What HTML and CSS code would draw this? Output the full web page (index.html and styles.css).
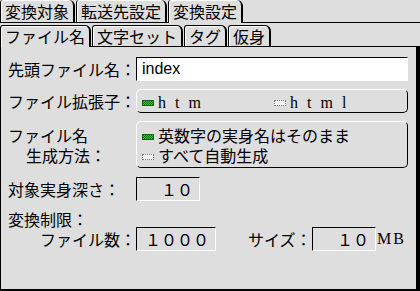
FILE: index.html
```html
<!DOCTYPE html>
<html lang="ja">
<head>
  <meta charset="UTF-8">
  <title>変換設定</title>
  <link rel="stylesheet" href="styles.css">
</head>
<body>

<div class="tabbar top-tabs">
  <div class="tab">変換対象</div>
  <div class="tab">転送先設定</div>
  <div class="tab active">変換設定</div>
</div>

<div class="tabbar sub-tabs">
  <div class="tab active">ファイル名</div>
  <div class="tab">文字セット</div>
  <div class="tab">タグ</div>
  <div class="tab">仮身</div>
</div>

<div class="panel">
  <div class="row">
    <span class="label">先頭ファイル名：</span>
    <div class="field text">index</div>
  </div>

  <div class="row">
    <span class="label">ファイル拡張子：</span>
    <div class="group inline">
      <span class="option first"><i class="mark on"></i><span class="latin">htm</span></span>
      <span class="option"><i class="mark"></i><span class="latin">html</span></span>
    </div>
  </div>

  <div class="row top">
    <div class="label two-line">
      <div>ファイル名</div>
      <div class="indent">生成方法：</div>
    </div>
    <div class="group stack">
      <span class="option"><i class="mark on"></i>英数字の実身名はそのまま</span>
      <span class="option"><i class="mark"></i>すべて自動生成</span>
    </div>
  </div>

  <div class="row">
    <span class="label">対象実身深さ：</span>
    <div class="field num depth">１０</div>
  </div>

  <div class="section-title">変換制限：</div>
  <div class="row limits">
    <span class="label right">ファイル数：</span>
    <div class="field num count">１０００</div>
    <span class="size-label">サイズ：</span>
    <div class="field num size">１０</div>
    <span class="latin unit">MB</span>
  </div>
</div>

</body>
</html>
```

FILE: styles.css
```css
* {
  box-sizing: border-box;
}

body {
  margin: 0;
  height: 100vh;
  overflow: hidden;
  display: flex;
  flex-direction: column;
  background-color: #dedede;
  color: #000;
  font-family: "Noto Sans CJK JP", sans-serif;
  font-size: 16px;
}

/* tab rows */
.tabbar {
  display: flex;
  align-items: flex-end;
  gap: 1px;
  box-shadow: inset 0 -1px 0 #000;
}

.top-tabs {
  height: 23px;
}

.sub-tabs {
  height: 24px;
}

.tab {
  background-color: #dedede;
  border: 1px solid #000;
  border-right-width: 2px;
  border-bottom: 0;
  border-radius: 3px 6px 0 0;
  padding: 0 4px;
  line-height: 20px;
  margin-bottom: 1px;
  box-shadow: inset 1px 1px 0 #fff;
  white-space: nowrap;
}

.top-tabs .tab {
  border-top: 0;
  line-height: 22px;
}

.tab.active {
  margin-bottom: 0;
  padding-bottom: 1px;
}

/* panel */
.panel {
  flex: 1;
  border-left: 1px solid #000;
  border-right: 4px solid #000;
  border-bottom: 2px solid #000;
  padding: 10px 0 0 7px;
}

.row {
  display: flex;
  align-items: center;
  margin-bottom: 8px;
}

.row.top {
  align-items: flex-start;
  margin-bottom: 9px;
}

.label {
  width: 128px;
  flex-shrink: 0;
  white-space: nowrap;
  line-height: 24px;
}

.label.two-line {
  padding-top: 4px;
  line-height: 20px;
}

.indent {
  padding-left: 18px;
}

.label.right {
  text-align: right;
}

/* sunken fields */
.field {
  height: 24px;
  border: 1px solid;
  border-color: #000 #fff #fff #000;
  line-height: 22px;
  white-space: nowrap;
}

.field.text {
  width: 272px;
  background-color: #fff;
  padding-left: 5px;
  font-family: "Liberation Sans", sans-serif;
}

.field.num {
  text-align: right;
  padding-right: 6px;
}

.depth {
  width: 64px;
}

.count {
  width: 80px;
}

.size {
  width: 64px;
}

/* raised radio groups */
.group {
  width: 272px;
  border: 1px solid;
  border-color: #fff #000 #000 #fff;
  border-radius: 5px;
  padding-left: 5px;
}

.group.inline {
  display: flex;
  height: 24px;
  line-height: 22px;
}

.group.stack {
  display: flex;
  flex-direction: column;
  padding-top: 3px;
  padding-bottom: 2px;
  line-height: 20px;
}

.option {
  white-space: nowrap;
}

.option.first {
  width: 132px;
}

.mark {
  display: inline-block;
  width: 12px;
  height: 6px;
  margin-right: 4px;
  vertical-align: 2px;
  border: 1px dotted #7a7a7a;
  background-color: #f2f2f2;
}

.mark.on {
  border: 1px solid #1f5f1f;
  background: repeating-conic-gradient(#1ed41e 0 25%, #0b7a0b 0 50%) 0 0 / 2px 2px;
}

.latin {
  font-family: "Liberation Serif", serif;
  letter-spacing: 9px;
}

.section-title {
  line-height: 20px;
}

.row.limits {
  margin-top: -2px;
}

.size-label {
  margin-left: 32px;
  width: 64px;
  white-space: nowrap;
}

.unit {
  font-size: 16px;
  letter-spacing: 2px;
  padding-left: 1px;
}
```
